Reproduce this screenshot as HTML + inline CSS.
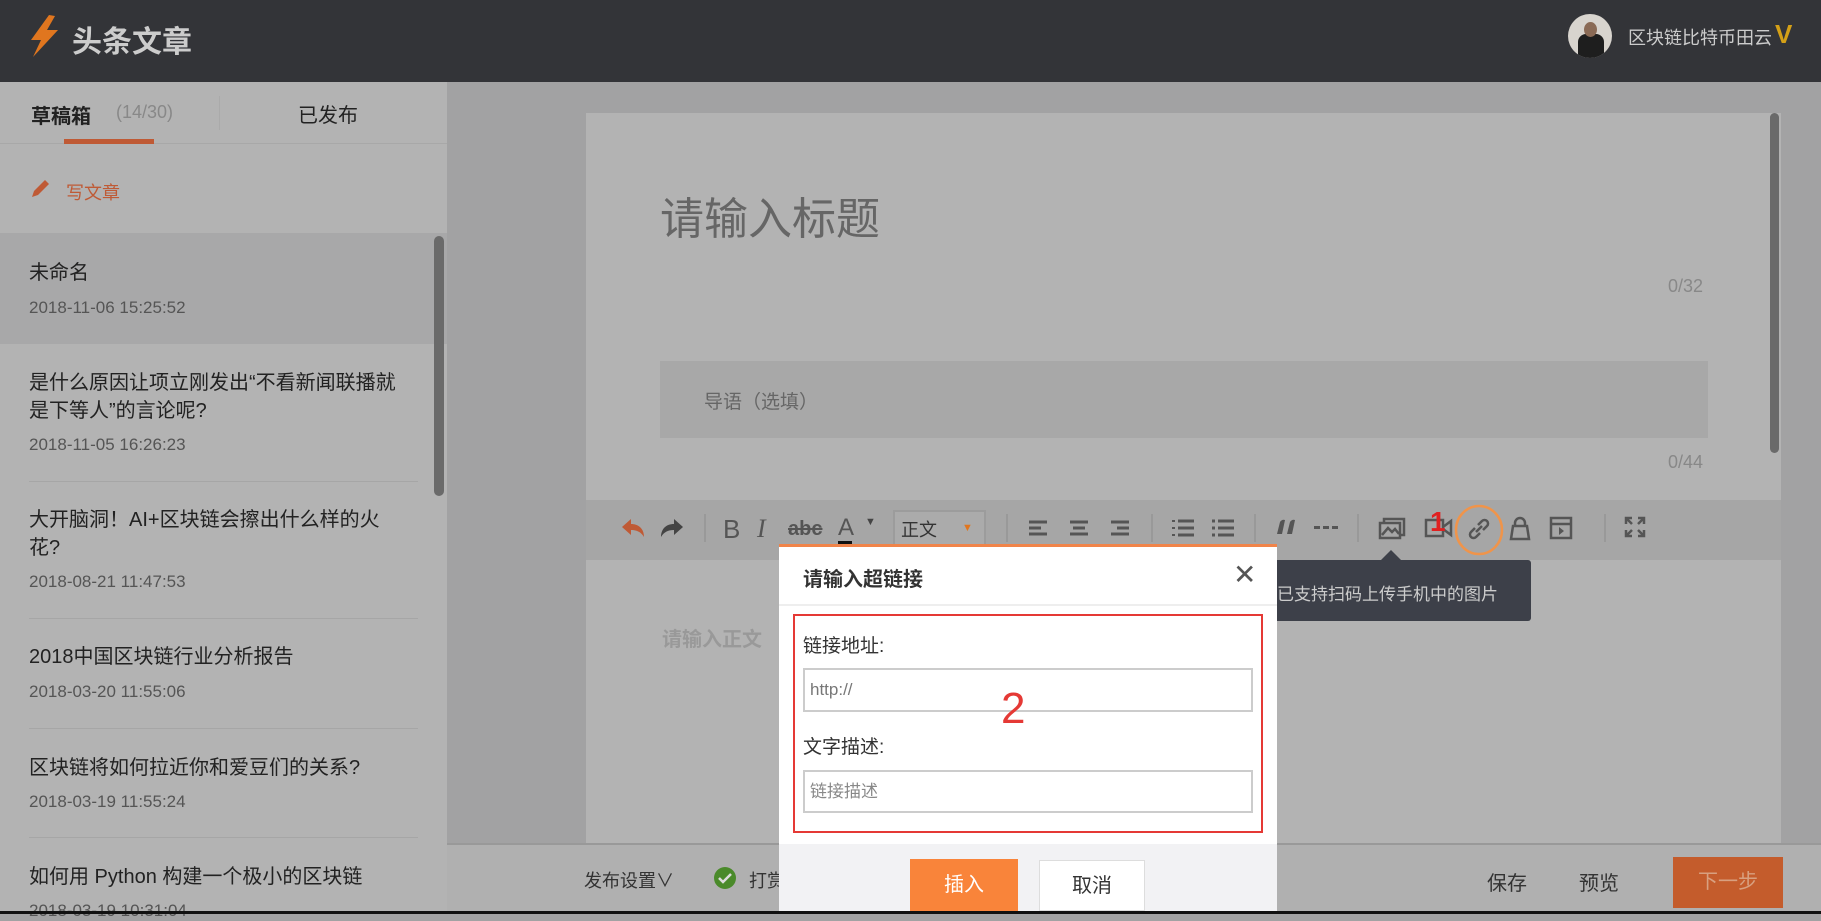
<!DOCTYPE html>
<html><head><meta charset="utf-8"><style>
*{margin:0;padding:0;box-sizing:border-box}
body{width:1821px;height:914px;overflow:hidden;background:#a2a2a3;font-family:"Liberation Sans","Noto Sans CJK SC",sans-serif;position:relative}
.a{position:absolute;white-space:nowrap}
.hdr{left:0;top:0;width:1821px;height:82px;background:#333438}
.side{left:0;top:82px;width:447px;height:832px;background:#b3b3b3}
.t{font-size:20px;color:#222;line-height:28px}
.d{font-size:17px;color:#555}
.sep{height:1px;background:#a6a6a6;left:29px;width:389px}
.ic{position:absolute;top:516px}
.vs{position:absolute;top:514px;width:2px;height:28px;background:#999}
</style></head><body>
<div class="a hdr"></div>
<svg class="a" style="left:28px;top:15px" width="32" height="42" viewBox="0 0 32 42"><path d="M21 0 L3 25 L13 25 L5 42 L30 15 L19 15 L27 1Z" fill="#e0761f"/></svg>
<div class="a" style="left:72px;top:17px;font-size:30px;font-weight:bold;color:#ccc">头条文章</div>
<div class="a" style="left:1568px;top:14px;width:44px;height:44px;border-radius:50%;background:#d8d4ce;overflow:hidden"><div style="position:absolute;left:10px;top:20px;width:26px;height:26px;background:#1e1e1e;border-radius:8px 8px 0 0"></div><div style="position:absolute;left:16px;top:8px;width:13px;height:15px;background:#8a6a55;border-radius:50%"></div></div>
<div class="a" style="left:1628px;top:24px;font-size:18px;color:#ccc">区块链比特币田云</div>
<div class="a" style="left:1775px;top:19px;font-size:26px;font-weight:bold;color:#d4a017">V</div>

<div class="a side"></div>
<div class="a" style="left:31px;top:100px;font-size:20px;font-weight:bold;color:#222">草稿箱</div>
<div class="a" style="left:116px;top:102px;font-size:18px;color:#888">(14/30)</div>
<div class="a" style="left:219px;top:96px;width:1px;height:34px;background:#aaa"></div>
<div class="a" style="left:298px;top:99px;font-size:20px;color:#222">已发布</div>
<div class="a" style="left:0;top:143px;width:447px;height:1px;background:#a8a8a8"></div>
<div class="a" style="left:64px;top:139px;width:90px;height:5px;background:#bf5a35"></div>
<svg class="a" style="left:29px;top:178px" width="22" height="22" viewBox="0 0 22 22"><path d="M3 19 L5 13 L16 2 L20 6 L9 17Z" fill="#bf5a35"/></svg>
<div class="a" style="left:66px;top:179px;font-size:18px;color:#bf5a35">写文章</div>
<div class="a" style="left:0;top:233px;width:447px;height:111px;background:#a8a8a9"></div>
<div class="a" style="left:434px;top:236px;width:10px;height:260px;border-radius:5px;background:#6a6a6a"></div>
<div class="a t" style="left:29px;top:259px">未命名</div>
<div class="a d" style="left:29px;top:298px">2018-11-06 15:25:52</div>
<div class="a t" style="left:29px;top:369px">是什么原因让项立刚发出“不看新闻联播就</div>
<div class="a t" style="left:29px;top:397px">是下等人”的言论呢?</div>
<div class="a d" style="left:29px;top:435px">2018-11-05 16:26:23</div>
<div class="a sep" style="top:481px"></div>
<div class="a t" style="left:29px;top:506px">大开脑洞！AI+区块链会擦出什么样的火</div>
<div class="a t" style="left:29px;top:534px">花?</div>
<div class="a d" style="left:29px;top:572px">2018-08-21 11:47:53</div>
<div class="a sep" style="top:618px"></div>
<div class="a t" style="left:29px;top:643px">2018中国区块链行业分析报告</div>
<div class="a d" style="left:29px;top:682px">2018-03-20 11:55:06</div>
<div class="a sep" style="top:728px"></div>
<div class="a t" style="left:29px;top:754px">区块链将如何拉近你和爱豆们的关系?</div>
<div class="a d" style="left:29px;top:792px">2018-03-19 11:55:24</div>
<div class="a sep" style="top:837px"></div>
<div class="a t" style="left:29px;top:863px">如何用 Python 构建一个极小的区块链</div>
<div class="a d" style="left:29px;top:901px">2018-03-19 10:31:04</div>

<div class="a" style="left:586px;top:113px;width:1195px;height:731px;background:#b3b3b3"></div>
<div class="a" style="left:1770px;top:113px;width:9px;height:340px;border-radius:5px;background:#6a6a6a"></div>
<div class="a" style="left:660px;top:183px;font-size:44px;color:#666">请输入标题</div>
<div class="a" style="left:1668px;top:276px;font-size:18px;color:#888">0/32</div>
<div class="a" style="left:660px;top:361px;width:1048px;height:77px;background:#a8a8a8"></div>
<div class="a" style="left:704px;top:387px;font-size:19px;color:#666">导语（选填）</div>
<div class="a" style="left:1668px;top:452px;font-size:18px;color:#888">0/44</div>
<div class="a" style="left:586px;top:500px;width:1195px;height:60px;background:#a6a6a6"></div>
<div class="a" style="left:662px;top:623px;font-size:20px;font-weight:bold;color:#999">请输入正文</div>

<!-- toolbar -->
<svg class="ic" style="left:620px" width="26" height="24" viewBox="0 0 26 24"><path d="M2 11 L11 3 V8 C19 8 24 13 24 21 C21 16 17 14 11 14 V19Z" fill="#bf5a35"/></svg>
<svg class="ic" style="left:659px" width="26" height="24" viewBox="0 0 26 24"><path d="M24 11 L15 3 V8 C7 8 2 13 2 21 C5 16 9 14 15 14 V19Z" fill="#444"/></svg>
<div class="vs" style="left:704px"></div>
<div class="a" style="left:723px;top:514px;font-size:26px;color:#555">B</div>
<div class="a" style="left:757px;top:514px;font-size:26px;font-style:italic;font-family:'Liberation Serif',serif;color:#555">I</div>
<div class="a" style="left:788px;top:518px;font-size:20px;font-weight:bold;color:#555;text-decoration:line-through">abc</div>
<div class="a" style="left:838px;top:514px;font-size:24px;color:#555">A</div>
<div class="a" style="left:838px;top:541px;width:14px;height:4px;background:#111"></div>
<div class="a" style="left:865px;top:516px;font-size:11px;color:#444">▼</div>
<div class="a" style="left:893px;top:510px;width:93px;height:36px;border:2px solid #9c9c9c;background:#ababab"></div>
<div class="a" style="left:901px;top:516px;font-size:18px;color:#333">正文</div>
<div class="a" style="left:962px;top:522px;font-size:11px;color:#e0761f">▼</div>
<div class="vs" style="left:1006px"></div>
<svg class="ic" style="left:1027px" width="120" height="24" viewBox="0 0 120 24" stroke="#555" stroke-width="3"><path d="M2 6H20M2 12H14M2 18H20"/><path d="M43 6H61M46 12H58M43 18H61"/><path d="M84 6H102M90 12H102M84 18H102"/></svg>
<div class="vs" style="left:1151px"></div>
<svg class="ic" style="left:1170px" width="70" height="24" viewBox="0 0 70 24" stroke="#555" stroke-width="3"><path d="M8 5H24M8 12H24M8 19H24"/><path d="M2 5H5M2 12H5M2 19H5" stroke-width="2"/><path d="M48 5H64M48 12H64M48 19H64"/><path d="M42 5H45M42 12H45M42 19H45"/></svg>
<div class="vs" style="left:1254px"></div>
<svg class="ic" style="left:1276px;top:519px" width="20" height="16" viewBox="0 0 20 16" fill="#555"><path d="M1 15 L4 3 Q6 0 9 1 L6 15Z M11 15 L14 3 Q16 0 19 1 L16 15Z"/></svg>
<svg class="ic" style="left:1314px;top:526px" width="24" height="4" viewBox="0 0 24 4" fill="#555"><rect x="0" y="0" width="6" height="3"/><rect x="9" y="0" width="6" height="3"/><rect x="18" y="0" width="6" height="3"/></svg>
<div class="vs" style="left:1357px"></div>
<svg class="ic" style="left:1378px" width="28" height="24" viewBox="0 0 28 24" fill="none" stroke="#555" stroke-width="2.5"><rect x="6" y="3" width="20" height="16"/><rect x="2" y="7" width="20" height="15" fill="#a6a6a6"/><path d="M4 19 L10 12 L14 16 L17 13 L21 18"/></svg>
<svg class="ic" style="left:1424px" width="30" height="24" viewBox="0 0 30 24" fill="none" stroke="#555" stroke-width="2.5"><rect x="2" y="4" width="17" height="16"/><path d="M19 11 L27 5 V19 L19 13"/></svg>
<div class="a" style="left:1430px;top:506px;font-size:28px;color:#e02020;font-weight:bold">1</div>
<svg class="ic" style="left:1466px" width="26" height="26" viewBox="0 0 26 26" fill="none" stroke="#555" stroke-width="2.5"><path d="M12 9 L16 5 A3.5 3.5 0 0 1 21 10 L17 14"/><path d="M14 17 L10 21 A3.5 3.5 0 0 1 5 16 L9 12"/><path d="M10 16 L16 10"/></svg>
<svg class="a" style="left:1453px;top:504px" width="52" height="52" viewBox="0 0 52 52"><ellipse cx="26" cy="26" rx="23" ry="24" fill="none" stroke="#f0944a" stroke-width="2.5"/></svg>
<svg class="ic" style="left:1508px" width="24" height="26" viewBox="0 0 24 26" fill="none" stroke="#555" stroke-width="2.5"><path d="M7 10 V7 A5 5 0 0 1 17 7 V10"/><path d="M3 23 L5 10 H19 L21 23Z"/></svg>
<svg class="ic" style="left:1549px" width="24" height="24" viewBox="0 0 24 24" fill="none" stroke="#555" stroke-width="2.5"><rect x="2" y="2" width="20" height="20"/><path d="M2 8H22"/><path d="M10 11 L15 15 L10 19Z" fill="#555" stroke="none"/></svg>
<div class="vs" style="left:1604px"></div>
<svg class="ic" style="left:1624px" width="22" height="22" viewBox="0 0 22 22" fill="none" stroke="#555" stroke-width="2.5"><path d="M2 8V2H8M2 2L8 8M14 2H20V8M20 2L14 8M2 14V20H8M2 20L8 14M20 14V20H14M20 20L14 14"/></svg>

<!-- tooltip -->
<div class="a" style="left:1274px;top:560px;width:257px;height:61px;background:#3d4049;border-radius:3px"></div>
<div class="a" style="left:1381px;top:550px;width:0;height:0;border-left:10px solid transparent;border-right:10px solid transparent;border-bottom:10px solid #3d4049"></div>
<div class="a" style="left:1277px;top:580px;font-size:17px;color:#ccc">已支持扫码上传手机中的图片</div>

<!-- bottom bar -->
<div class="a" style="left:447px;top:843px;width:1374px;height:2px;background:#999"></div>
<div class="a" style="left:447px;top:845px;width:1374px;height:66px;background:#b0b0b0"></div>
<div class="a" style="left:584px;top:867px;font-size:18px;color:#333">发布设置∨</div>
<svg class="a" style="left:713px;top:866px" width="24" height="24" viewBox="0 0 24 24"><circle cx="12" cy="12" r="11" fill="#4a8a2a"/><path d="M6 12 L10 16 L18 8" stroke="#ddd" stroke-width="2.5" fill="none"/></svg>
<div class="a" style="left:749px;top:867px;font-size:18px;color:#333">打赏</div>
<div class="a" style="left:1487px;top:867px;font-size:20px;color:#333">保存</div>
<div class="a" style="left:1579px;top:867px;font-size:20px;color:#333">预览</div>
<div class="a" style="left:1673px;top:857px;width:110px;height:51px;background:#c45c2c;color:#d8a080;font-size:20px;text-align:center;line-height:51px">下一步</div>
<div class="a" style="left:0;top:911px;width:1821px;height:3px;background:#111"></div>

<!-- dialog -->
<div class="a" style="left:779px;top:544px;width:498px;height:367px;background:#fff;border-top:3px solid #f0844a"></div>
<div class="a" style="left:803px;top:563px;font-size:20px;font-weight:bold;color:#333">请输入超链接</div>
<div class="a" style="left:1233px;top:558px;font-size:28px;color:#555">✕</div>
<div class="a" style="left:779px;top:604px;width:498px;height:2px;background:#eee"></div>
<div class="a" style="left:793px;top:614px;width:470px;height:219px;border:2px solid #e53935"></div>
<div class="a" style="left:803px;top:631px;font-size:19px;color:#333">链接地址:</div>
<div class="a" style="left:803px;top:668px;width:450px;height:44px;border:2px solid #ccc;padding-left:5px;font-size:17px;color:#777;line-height:40px">http://</div>
<div class="a" style="left:1001px;top:684px;font-size:44px;color:#e53935">2</div>
<div class="a" style="left:803px;top:732px;font-size:19px;color:#333">文字描述:</div>
<div class="a" style="left:803px;top:770px;width:450px;height:43px;border:2px solid #ccc;padding-left:5px;font-size:17px;color:#888;line-height:40px">链接描述</div>
<div class="a" style="left:779px;top:844px;width:498px;height:67px;background:#f2f2f4"></div>
<div class="a" style="left:910px;top:859px;width:108px;height:52px;background:#f9843a;color:#fff;font-size:20px;text-align:center;line-height:52px">插入</div>
<div class="a" style="left:1039px;top:860px;width:106px;height:51px;background:#fff;border:1px solid #ddd;color:#333;font-size:20px;text-align:center;line-height:50px">取消</div>
</body></html>
